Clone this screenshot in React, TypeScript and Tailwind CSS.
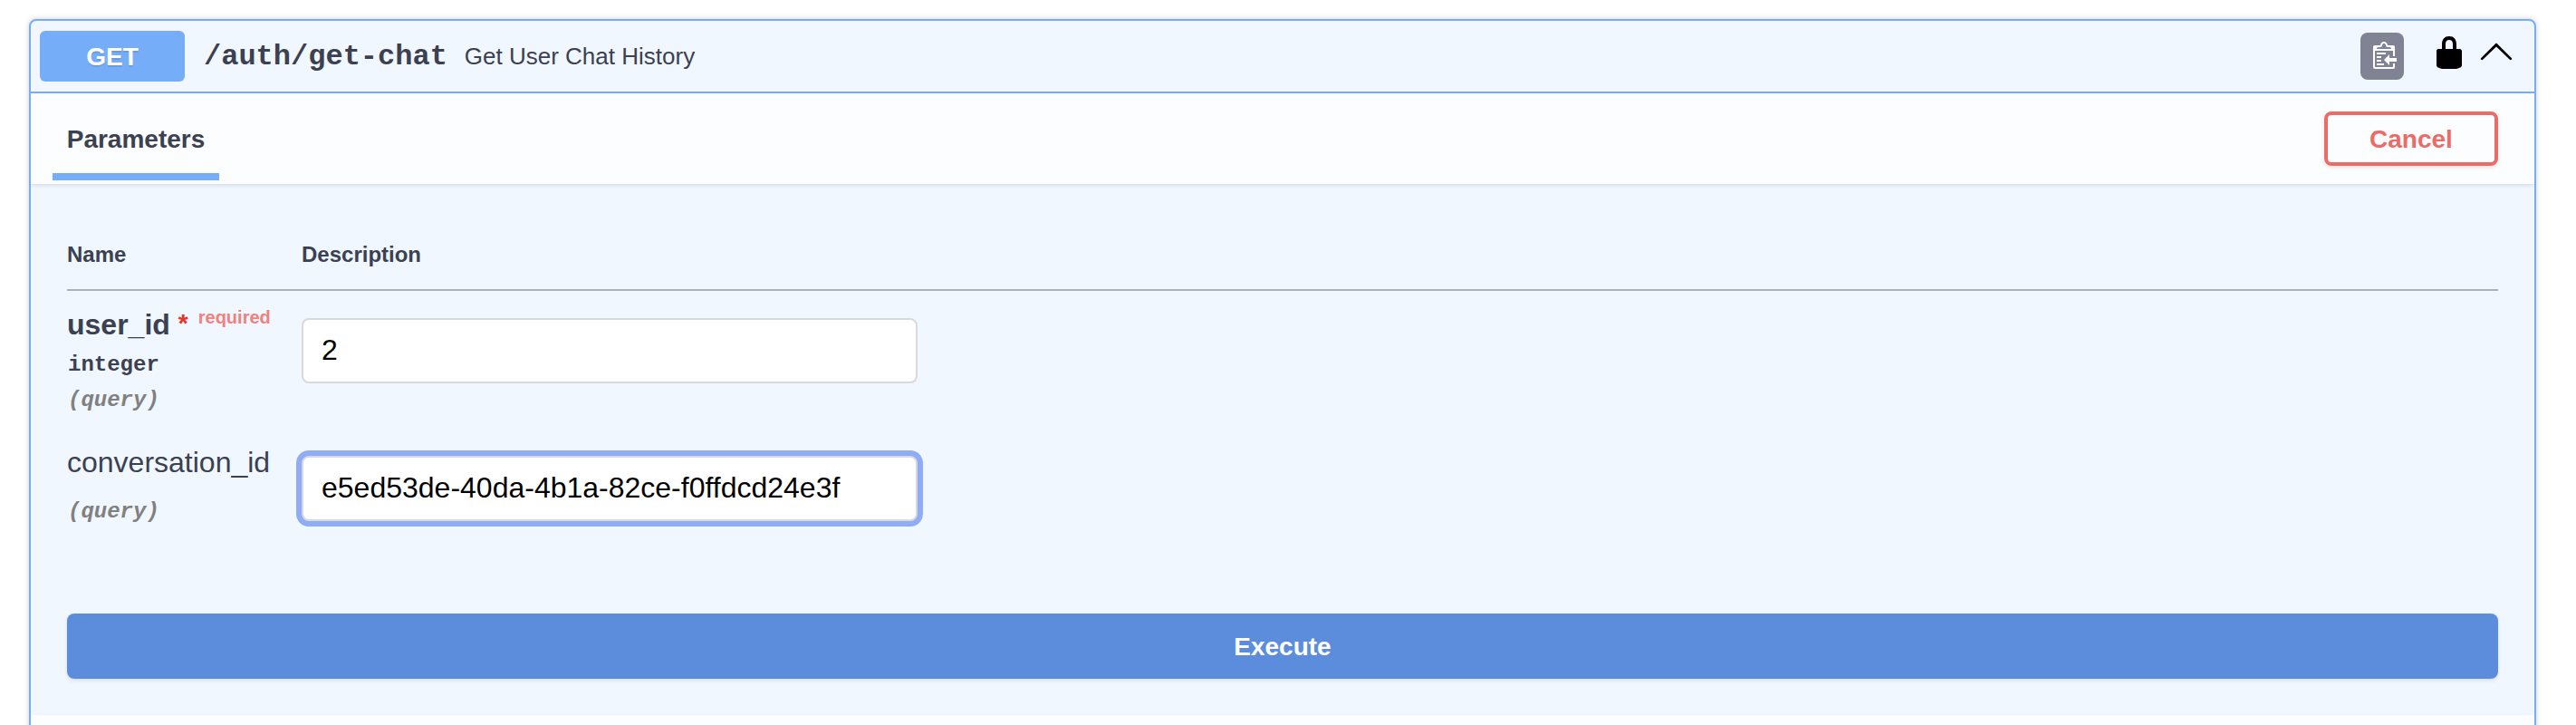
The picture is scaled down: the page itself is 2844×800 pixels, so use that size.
import React from "react";

const sans = "font-['Liberation_Sans',Arial,sans-serif]";
const mono = "font-['Liberation_Mono','Courier_New',monospace]";

function CopyIcon() {
  return (
    <svg width="30" height="32" viewBox="0 0 15 16" className="block">
      <g transform="translate(2, -1)">
        <path
          fill="#ffffff"
          fillRule="evenodd"
          d="M2 13h4v1H2v-1zm5-6H2v1h5V7zm2 3V8l-3 3 3 3v-2h5v-2H9zM4.5 9H2v1h2.5V9zM2 12h2.5v-1H2v1zm9 1h1v2c-.02.28-.11.52-.3.7-.19.18-.42.28-.7.3H1c-.55 0-1-.45-1-1V4c0-.55.45-1 1-1h3c0-1.11.89-2 2-2 1.11 0 2 .89 2 2h3c.55 0 1 .45 1 1v5h-1V6H1v9h10v-2zM2 5h8c0-.55-.45-1-1-1H8c-.55 0-1-.45-1-1s-.45-1-1-1-1 .45-1 1-.45 1-1 1H3c-.55 0-1 .45-1 1z"
        />
      </g>
    </svg>
  );
}

function LockIcon() {
  return (
    <svg width="40" height="40" viewBox="0 0 20 20" className="block">
      <path fill="#000000" d="M15.8 8H14V5.6C14 2.703 12.665 1 10 1 7.334 1 6 2.703 6 5.6V8H4c-.553 0-1 .646-1 1.199V17c0 .549.428 1.139.951 1.307l1.197.387C5.672 18.861 6.55 19 7.1 19h5.8c.549 0 1.428-.139 1.951-.307l1.196-.387c.524-.167.953-.757.953-1.306V9.199C17 8.646 16.352 8 15.8 8zM12 8H8V5.199C8 3.754 8.797 3 10 3c1.203 0 2 .754 2 2.199V8z" />
    </svg>
  );
}

function ChevronIcon() {
  return (
    <svg width="40" height="40" viewBox="0 0 20 20" className="block">
      <path fill="#000000" d="M 17.418 14.908 C 17.69 15.176 18.127 15.176 18.397 14.908 C 18.667 14.64 18.668 14.207 18.397 13.939 L 10.489 6.109 C 10.219 5.841 9.782 5.841 9.51 6.109 L 1.602 13.939 C 1.332 14.207 1.332 14.64 1.602 14.908 C 1.873 15.176 2.311 15.176 2.581 14.908 L 10 7.767 L 17.418 14.908 Z" />
    </svg>
  );
}

function Summary() {
  return (
    <div className="flex h-20 items-start border-b-2 border-[#76adf8] pl-2.5 pr-[22px]">
      <div className="mt-[11px] h-14 w-40 rounded-md bg-[#76adf9] text-center text-[28px] leading-[58px] font-bold text-white [text-shadow:0_2px_0_rgba(0,0,0,0.1)]">
        GET
      </div>
      <div className={`ml-[21px] mt-[22px] text-[32px] leading-9 font-bold whitespace-nowrap ${mono}`}>/auth/get-chat</div>
      <div className="ml-[19px] mt-6 grow text-[26px] leading-[30px]">Get User Chat History</div>
      <button className="mt-[13px] flex h-[52px] w-12 items-start rounded-lg bg-[#7f8394] pt-2.5 pl-2.5">
        <CopyIcon />
      </button>
      <button className="mt-[15px] ml-[30px]">
        <LockIcon />
      </button>
      <button className="mt-[13px] ml-3">
        <ChevronIcon />
      </button>
    </div>
  );
}

function SectionHeader() {
  return (
    <div className="flex h-[100px] justify-between bg-[#fcfdff] pr-10 pl-6 shadow-[0_2px_4px_rgba(0,0,0,0.1)]">
      <div className="flex h-24 w-[184px] flex-col border-b-8 border-[#76adf9]">
        <h4 className="mt-[35px] text-center text-[28px] leading-8 font-bold">Parameters</h4>
      </div>
      <button className="mt-5 h-[60px] w-48 rounded-lg border-4 border-[#ed6b66] pt-px text-center text-[28px] leading-[52px] font-bold text-[#ed6b66] shadow-[0_2px_4px_rgba(0,0,0,0.1)]">
        Cancel
      </button>
    </div>
  );
}

export default function App() {
  return (
    <div className={`h-[800px] overflow-hidden bg-white px-8 pr-11 pt-[21px] text-[#3b4151] ${sans}`}>
      <div className="h-[860px] overflow-hidden rounded-lg border-2 border-[#76adf8] bg-[#f0f7ff] shadow-[0_0_6px_rgba(0,0,0,0.19)]">
        <Summary />
        <SectionHeader />
        <div className="px-10 pt-16">
          <div className="flex h-[54px] border-b-2 border-[#abb2bd] text-2xl leading-7 font-bold">
            <div className="w-[259px]">Name</div>
            <div>Description</div>
          </div>
          <div className="flex h-[152px]">
            <div className="w-[259px] pt-[19px]">
              <div className="flex h-9 items-start font-bold whitespace-nowrap">
                <span className="text-[32px] leading-9">user_id</span>
                <span className="ml-[9px] mt-[3px] text-[28px] leading-7 text-[#ea3323]">*</span>
                <span className="ml-[11px] text-xl leading-5 text-[#f0827d]">required</span>
              </div>
              <div className={`mt-[13px] pl-px text-2xl leading-7 font-bold ${mono}`}>integer</div>
              <div className={`mt-[11px] pl-px text-2xl leading-7 font-bold text-[#808080] italic ${mono}`}>(query)</div>
            </div>
            <input
              defaultValue="2"
              className="mt-[30px] h-[72px] w-[680px] rounded-lg border-2 border-[#d9d9d9] bg-white px-5 pb-0.5 text-[32px] text-black outline-none"
            />
          </div>
          <div className="flex h-[204px]">
            <div className="w-[259px] pt-[19px]">
              <div className="text-[32px] leading-9">conversation_id</div>
              <div className={`mt-[23px] pl-px text-2xl leading-7 font-bold text-[#808080] italic ${mono}`}>(query)</div>
            </div>
            <input
              defaultValue="e5ed53de-40da-4b1a-82ce-f0ffdcd24e3f"
              className="mt-[30px] h-[72px] w-[680px] rounded-lg border-2 border-[#d9d9d9] bg-white px-5 pb-0.5 text-[32px] text-black shadow-[0_0_0_6px_#8fadf7] outline-none"
            />
          </div>
          <button className="block h-[72px] w-full rounded-lg bg-[#5c8ddd] pt-0.5 text-center text-[28px] leading-[70px] font-bold text-white shadow-[0_2px_4px_rgba(0,0,0,0.1)]">
            Execute
          </button>
        </div>
        <div className="mt-10 h-24 bg-[#fcfdff] shadow-[0_2px_4px_rgba(0,0,0,0.1)]" />
      </div>
    </div>
  );
}
